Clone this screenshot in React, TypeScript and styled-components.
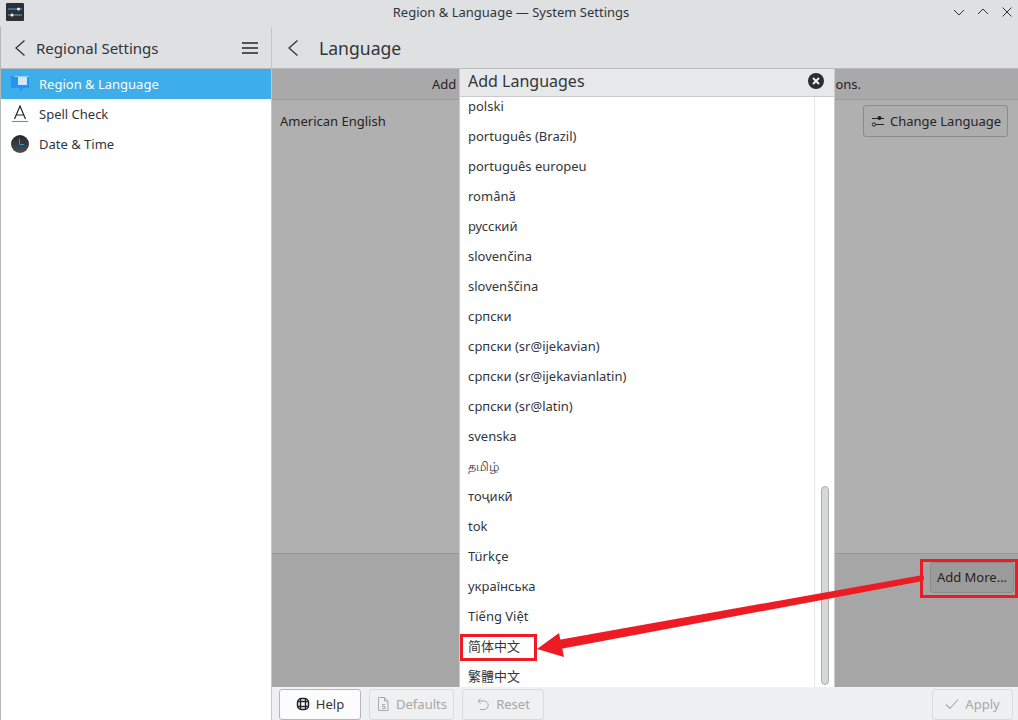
import React from 'react';
import styled, { createGlobalStyle } from 'styled-components';

const languages = [
  'polski',
  'português (Brazil)',
  'português europeu',
  'română',
  'русский',
  'slovenčina',
  'slovenščina',
  'српски',
  'српски (sr@ijekavian)',
  'српски (sr@ijekavianlatin)',
  'српски (sr@latin)',
  'svenska',
  'தமிழ்',
  'тоҷикӣ',
  'tok',
  'Türkçe',
  'українська',
  'Tiếng Việt',
  '简体中文',
  '繁體中文',
];

const GlobalStyle = createGlobalStyle`
  html, body {
    margin: 0;
    padding: 0;
    background: #eff0f1;
  }
  body {
    font-family: "Noto Sans", "Noto Sans CJK SC", sans-serif;
    font-size: 13px;
    color: #31363b;
  }
`;

const Window = styled.div`
  position: relative;
  width: 1018px;
  height: 720px;
  overflow: hidden;
  display: flex;
  flex-direction: column;
`;

const TitleBar = styled.div`
  height: 27px;
  background: #dee0e2;
  display: flex;
  align-items: center;
  justify-content: space-between;
  padding: 0 4px 3px 6px;
  box-sizing: border-box;
`;

const TitleText = styled.div`
  flex: 1;
  text-align: center;
  font-size: 13px;
  padding-left: 46px;
  color: #31363b;
`;

const WindowButtons = styled.div`
  display: flex;
  gap: 10px;
  align-items: center;
`;

const Body = styled.div`
  flex: 1;
  display: flex;
  min-height: 0;
`;

const Sidebar = styled.aside`
  width: 271px;
  background: #fff;
  border-left: 1px solid #b5b7b9;
  box-sizing: border-box;
  display: flex;
  flex-direction: column;
`;

const SidebarHeader = styled.div`
  height: 42px;
  background: #dee0e2;
  border-bottom: 1px solid #b9bbbd;
  box-sizing: border-box;
  display: flex;
  align-items: center;
  padding: 0 13px 0 14px;
`;

const SidebarTitle = styled.div`
  flex: 1;
  font-size: 15px;
  margin-left: 11px;
`;

const SidebarItem = styled.div<{ $active?: boolean }>`
  height: 30px;
  display: flex;
  align-items: center;
  gap: 10px;
  padding-left: 10px;
  background: ${(p) => (p.$active ? '#3daee9' : 'transparent')};
  color: ${(p) => (p.$active ? '#fcfcfc' : '#31363b')};
`;

const Main = styled.main`
  flex: 1;
  display: flex;
  flex-direction: column;
  border-left: 1px solid #c4c6c8;
  min-width: 0;
`;

const MainHeader = styled.div`
  height: 42px;
  background: #dee0e2;
  border-bottom: 1px solid #b9bbbd;
  box-sizing: border-box;
  display: flex;
  align-items: center;
  padding-left: 16px;
`;

const MainTitle = styled.h1`
  margin: 0 0 0 21px;
  font-size: 17.6px;
  font-weight: 400;
`;

const Content = styled.div`
  position: relative;
  flex: 1;
  display: flex;
  flex-direction: column;
  background: #b0b0b0;
  min-height: 0;
  color: #242424;
`;

const Banner = styled.div`
  height: 30px;
  background: #a9a9a9;
  border-bottom: 1px solid #9c9c9c;
  display: flex;
  justify-content: space-between;
  align-items: center;
  padding: 0 157px 0 160px;
`;

const LanguageRow = styled.div`
  flex: 1;
  display: flex;
  align-items: flex-start;
  justify-content: space-between;
  padding: 5px 10px 0 8px;
`;

const LanguageName = styled.div`
  line-height: 30px;
  margin-top: 1px;
`;

const DimButton = styled.button`
  font: inherit;
  color: #242424;
  background: #adadad;
  border: 1px solid #8b8b8b;
  border-radius: 3px;
  width: 145px;
  height: 32px;
  padding: 0 0 0 7px;
  display: flex;
  align-items: center;
  gap: 5px;
  box-sizing: border-box;
  white-space: nowrap;
`;

const AddMoreRow = styled.div`
  height: 134px;
  background: #a6a6a6;
  border-top: 1px solid #979797;
  box-sizing: border-box;
  display: flex;
  justify-content: flex-end;
  align-items: flex-start;
  padding: 8px 4px 0 0;
`;

const AddMoreButton = styled(DimButton)`
  background: #9b9b9b;
  width: 84px;
  height: 31px;
  padding: 0 0 2px;
  justify-content: center;
`;

const Dialog = styled.div`
  position: absolute;
  left: 187px;
  top: 0;
  width: 376px;
  bottom: 0;
  background: #fff;
  border-left: 1px solid #c9cbcc;
  border-right: 1px solid #c9cbcc;
  box-sizing: border-box;
  display: flex;
  flex-direction: column;
  color: #31363b;
`;

const DialogHeader = styled.div`
  height: 28px;
  flex: none;
  background: #e6e8ea;
  border-bottom: 1px solid #c9cbcc;
  box-sizing: border-box;
  display: flex;
  align-items: center;
  justify-content: space-between;
  padding: 0 10px 4px 8px;
  font-size: 16px;
`;

const DialogBody = styled.div`
  flex: 1;
  display: flex;
  min-height: 0;
`;

const ListViewport = styled.div`
  flex: 1;
  overflow: hidden;
  border-right: 1px solid #e4e5e6;
`;

const LanguageList = styled.ul`
  list-style: none;
  margin: -6px 0 0;
  padding: 0;
`;

const LanguageItem = styled.li`
  height: 30px;
  line-height: 30px;
  padding-left: 8px;
  white-space: nowrap;
`;

const ScrollTrack = styled.div`
  width: 19px;
  flex: none;
  position: relative;
`;

const ScrollThumb = styled.div`
  position: absolute;
  left: 6px;
  top: 389px;
  bottom: 2px;
  width: 8px;
  box-sizing: border-box;
  background: #d6d8d8;
  border: 1px solid #adafb0;
  border-radius: 4px;
`;

const BottomBar = styled.div`
  height: 33px;
  background: #eff0f1;
  display: flex;
  align-items: center;
  padding: 0 5px 0 7px;
  gap: 8px;
`;

const ActionButton = styled.button<{ $disabled?: boolean; $width: number }>`
  font: inherit;
  width: ${(p) => p.$width}px;
  height: 31px;
  margin-top: 1px;
  border-radius: 3px;
  border: 1px solid ${(p) => (p.$disabled ? '#d8dadb' : '#b4b6b8')};
  background: ${(p) => (p.$disabled ? '#eff0f1' : '#fcfcfc')};
  color: ${(p) => (p.$disabled ? '#a5a7a9' : '#31363b')};
  display: flex;
  align-items: center;
  justify-content: center;
  gap: 6px;
  box-sizing: border-box;
`;

const BottomSpacer = styled.div`
  flex: 1;
`;

const Annotations = styled.svg`
  position: absolute;
  left: 0;
  top: 0;
  pointer-events: none;
`;

const AppLogo = () => (
  <svg width="18" height="18" viewBox="0 0 18 18">
    <rect width="18" height="18" rx="1" fill="#2c3136" />
    <path d="M2 6h14" stroke="#3daee9" strokeWidth="1" />
    <path d="M2 12h14" stroke="#8a9ba8" strokeWidth="1" />
    <circle cx="12.5" cy="6" r="1.5" fill="#eff0f1" />
    <circle cx="6" cy="12" r="1.5" fill="#eff0f1" />
  </svg>
);

const Chevron = () => (
  <svg width="10" height="16" viewBox="0 0 10 16" fill="none">
    <path d="M9.5 0.5 1 8l8.5 7.5" stroke="#31363b" strokeWidth="1.3" />
  </svg>
);

const HamburgerIcon = () => (
  <svg width="16" height="12" viewBox="0 0 16 12">
    <path d="M0 1h16M0 6h16M0 11h16" stroke="#232629" strokeWidth="1.6" />
  </svg>
);

const RegionIcon = () => (
  <svg width="18" height="18" viewBox="0 0 18 18">
    <path d="M0 1h18v12h-6l-3 4v-4H0z" fill="#2196f3" />
    <path d="M7 2h9v8H7z" fill="#cfe8fb" />
    <path d="M3 1h15v1H3z" fill="#8fd0fa" />
  </svg>
);

const SpellIcon = () => (
  <svg width="18" height="18" viewBox="0 0 18 18" fill="none">
    <path d="M3.5 14 9 1 14.5 14M5.5 10h7" stroke="#232629" strokeWidth="1.2" />
    <path d="M1 16.5h16" stroke="#2fb96c" strokeWidth="1.1" />
  </svg>
);

const ClockIcon = () => (
  <svg width="18" height="18" viewBox="0 0 18 18" fill="none">
    <defs>
      <linearGradient id="clockFace" x1="0" y1="0" x2="0" y2="1">
        <stop offset="0" stopColor="#24282c" />
        <stop offset="1" stopColor="#4a5056" />
      </linearGradient>
    </defs>
    <circle cx="9" cy="9" r="9" fill="url(#clockFace)" />
    <path d="M8.5 3.5v6H13" stroke="#1d99f3" strokeWidth="1" />
  </svg>
);

const SlidersIcon = () => (
  <svg width="14" height="14" viewBox="0 0 14 14" fill="none">
    <path d="M1 4.5h12M5 10.5h8" stroke="#242424" strokeWidth="1" />
    <circle cx="8.5" cy="4" r="2" fill="#242424" />
    <circle cx="3" cy="10.5" r="1.7" stroke="#242424" />
  </svg>
);

const CloseBadge = () => (
  <svg width="16" height="16" viewBox="0 0 16 16">
    <circle cx="8" cy="8" r="8" fill="#2a2e32" />
    <path d="M5 5l6 6M11 5l-6 6" stroke="#eff0f1" strokeWidth="2" />
  </svg>
);

const HelpIcon = () => (
  <svg width="14" height="14" viewBox="0 0 14 14" fill="none">
    <rect x="1.5" y="1.5" width="11" height="11" rx="4" stroke="#232629" strokeWidth="1.5" />
    <path d="M4.5 1v12M9.5 1v12M1 4.5h12M1 9.5h12" stroke="#232629" strokeWidth="1.4" />
  </svg>
);

const DefaultsIcon = () => (
  <svg width="14" height="16" viewBox="0 0 14 16" fill="none">
    <path d="M2.5 1.5h6l3.5 3.5v9.5H2.5zM8.5 1.5V5H12" stroke="#a5a7a9" />
    <path d="M9 8.5H6.5v2h2.5v2H6" stroke="#a5a7a9" />
  </svg>
);

const ResetIcon = () => (
  <svg width="14" height="14" viewBox="0 0 14 14" fill="none">
    <path d="M4.5 1.5 2 4l2.5 2.5M2 4h6a4 4 0 0 1 0 8.5H4" stroke="#a5a7a9" />
  </svg>
);

const ApplyIcon = () => (
  <svg width="14" height="12" viewBox="0 0 14 12" fill="none">
    <path d="M1 6.500 5 10.500 13 1.500" stroke="#a5a7a9" strokeWidth="1.1" />
  </svg>
);

function App() {
  return (
    <Window>
      <GlobalStyle />
      <TitleBar>
        <AppLogo />
        <TitleText>Region &amp; Language — System Settings</TitleText>
        <WindowButtons>
          <svg width="14" height="14" viewBox="0 0 14 14" fill="none">
            <path d="M2 5l5 5 5-5" stroke="#31363b" />
          </svg>
          <svg width="14" height="14" viewBox="0 0 14 14" fill="none">
            <path d="M2 9l5-5 5 5" stroke="#31363b" />
          </svg>
          <svg width="14" height="14" viewBox="0 0 14 14" fill="none">
            <path d="M2.5 2.5l9 9M11.5 2.5l-9 9" stroke="#31363b" />
          </svg>
        </WindowButtons>
      </TitleBar>
      <Body>
        <Sidebar>
          <SidebarHeader>
            <Chevron />
            <SidebarTitle>Regional Settings</SidebarTitle>
            <HamburgerIcon />
          </SidebarHeader>
          <SidebarItem $active>
            <RegionIcon />
            Region &amp; Language
          </SidebarItem>
          <SidebarItem>
            <SpellIcon />
            Spell Check
          </SidebarItem>
          <SidebarItem>
            <ClockIcon />
            Date &amp; Time
          </SidebarItem>
        </Sidebar>
        <Main>
          <MainHeader>
            <Chevron />
            <MainTitle>Language</MainTitle>
          </MainHeader>
          <Content>
            <Banner>
              <span>Add</span>
              <span>ons.</span>
            </Banner>
            <LanguageRow>
              <LanguageName>American English</LanguageName>
              <DimButton>
                <SlidersIcon />
                Change Language
              </DimButton>
            </LanguageRow>
            <AddMoreRow>
              <AddMoreButton>Add More...</AddMoreButton>
            </AddMoreRow>
            <Dialog>
              <DialogHeader>
                Add Languages
                <CloseBadge />
              </DialogHeader>
              <DialogBody>
                <ListViewport>
                  <LanguageList>
                    {languages.map((name) => (
                      <LanguageItem key={name}>{name}</LanguageItem>
                    ))}
                  </LanguageList>
                </ListViewport>
                <ScrollTrack>
                  <ScrollThumb />
                </ScrollTrack>
              </DialogBody>
            </Dialog>
          </Content>
          <BottomBar>
            <ActionButton $width={82}>
              <HelpIcon />
              Help
            </ActionButton>
            <ActionButton $disabled $width={85}>
              <DefaultsIcon />
              Defaults
            </ActionButton>
            <ActionButton $disabled $width={82}>
              <ResetIcon />
              Reset
            </ActionButton>
            <BottomSpacer />
            <ActionButton $disabled $width={81}>
              <ApplyIcon />
              Apply
            </ActionButton>
          </BottomBar>
        </Main>
      </Body>
      <Annotations width="1018" height="720" viewBox="0 0 1018 720" fill="none">
        <rect x="921.5" y="560.5" width="95" height="36" stroke="#ed1c24" strokeWidth="3" />
        <rect x="461.5" y="635.5" width="74" height="24" stroke="#ed1c24" strokeWidth="3" />
        <path d="M923 575 558 640 560 649 923 581Q925 578 923 575z" fill="#ed1c24" />
        <path d="M537 649 559 633 564 657z" fill="#ed1c24" />
      </Annotations>
    </Window>
  );
}

export default App;
